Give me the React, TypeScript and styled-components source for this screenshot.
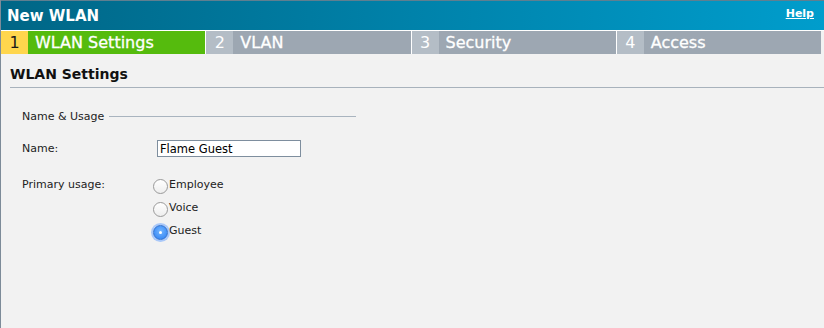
import React from "react";
import styled, { createGlobalStyle, css } from "styled-components";

const Global = createGlobalStyle`
  html, body { margin: 0; padding: 0; background: #f2f2f2; }
  body { font-family: "DejaVu Sans", Verdana, sans-serif; }
`;

const Page = styled.div`
  width: 824px;
  height: 328px;
  box-sizing: border-box;
  border-left: 1px solid #7d8b99;
  background: #f2f2f2;
  overflow: hidden;
`;

const Header = styled.div`
  height: 31px;
  box-sizing: border-box;
  border-top: 1px solid #5f7f90;
  border-bottom: 1px solid #ffffff;
  background: linear-gradient(to right, #006686 0%, #0082aa 50%, #009dcc 100%);
  display: flex;
  align-items: center;
  justify-content: space-between;
  padding: 0 10px 0 6px;
`;

const Title = styled.div`
  color: #ffffff;
  font-weight: bold;
  font-size: 15px;
`;

const Help = styled.a`
  color: #ffffff;
  font-weight: bold;
  font-size: 11px;
  text-decoration: underline;
  cursor: pointer;
  margin-bottom: 4px;
`;

const TabBar = styled.div`
  width: 820px;
  height: 23px;
  display: flex;
  gap: 1px;
  background: #ffffff;
`;

const Tab = styled.div`
  flex: 1;
  display: flex;
  align-items: stretch;
`;

const TabNum = styled.div<{ $active?: boolean }>`
  width: 27px;
  display: flex;
  align-items: center;
  justify-content: center;
  font-size: 16px;
  color: ${(p) => (p.$active ? "#1a1a1a" : "#ffffff")};
  background: ${(p) => (p.$active ? "#ffd64d" : "#b4bdc6")};
`;

const TabLabel = styled.div<{ $active?: boolean }>`
  flex: 1;
  display: flex;
  align-items: center;
  padding-left: 7px;
  font-size: 16px;
  color: #ffffff;
  -webkit-text-stroke: 0.3px #ffffff;
  background: ${(p) => (p.$active ? "#55bb0d" : "#9da7b2")};
`;

const Content = styled.div`
  padding: 12px 0 0 9px;
`;

const SectionTitle = styled.div`
  font-weight: bold;
  font-size: 14px;
  color: #111;
  padding-bottom: 5px;
  border-bottom: 1px solid #a8b2bc;
`;

const Group = styled.div`
  padding: 22px 0 0 12px;
`;

const Legend = styled.div`
  display: flex;
  align-items: center;
  width: 334px;
  font-size: 11px;
  color: #222;
  gap: 5px;
  &::after {
    content: "";
    flex: 1;
    height: 1px;
    background: #a9b4bf;
  }
`;

const Row = styled.div<{ $mt: number }>`
  display: flex;
  align-items: flex-start;
  margin-top: ${(p) => p.$mt}px;
`;

const Label = styled.div<{ $pt: number }>`
  width: 135px;
  padding-top: ${(p) => p.$pt}px;
  font-size: 11px;
  color: #222;
`;

const TextInput = styled.div`
  width: 144px;
  height: 17px;
  box-sizing: border-box;
  border: 1px solid #7e8e9e;
  background: #fff;
  font-size: 11.5px;
  color: #000;
  padding: 1px 0 0 2px;
  line-height: 14px;
`;

const RadioList = styled.div`
  display: flex;
  flex-direction: column;
  gap: 8px;
  margin-left: -4px;
  margin-top: 2px;
`;

const RadioRow = styled.div`
  display: flex;
  align-items: center;
  gap: 1px;
  font-size: 11px;
  color: #222;
  height: 15px;
`;

const RadioDot = styled.span<{ $checked?: boolean }>`
  width: 15px;
  height: 15px;
  border-radius: 50%;
  box-sizing: border-box;
  margin-top: 3px;
  position: relative;
  ${(p) =>
    p.$checked
      ? css`
          background: radial-gradient(circle at 50% 40%, #74b6ff, #2a7ef2);
          border: 1px solid #2d6fd0;
          box-shadow: 0 0 0 2px rgba(110, 165, 255, 0.55);
          &::after {
            content: "";
            position: absolute;
            left: 5px;
            top: 5px;
            width: 3px;
            height: 3px;
            border-radius: 50%;
            background: #fff;
          }
        `
      : css`
          background: linear-gradient(#ffffff, #eeeeee);
          border: 1px solid #9a9a9a;
        `}
`;

export default function App() {
  return (
    <Page>
      <Global />
      <Header>
        <Title>New WLAN</Title>
        <Help>Help</Help>
      </Header>
      <TabBar>
        {["WLAN Settings", "VLAN", "Security", "Access"].map((t, i) => (
          <Tab key={t}>
            <TabNum $active={i === 0}>{i + 1}</TabNum>
            <TabLabel $active={i === 0}>{t}</TabLabel>
          </Tab>
        ))}
      </TabBar>
      <Content>
        <SectionTitle>WLAN Settings</SectionTitle>
        <Group>
          <Legend>Name &amp; Usage</Legend>
          <Row $mt={17}>
            <Label $pt={2}>Name:</Label>
            <TextInput>Flame Guest</TextInput>
          </Row>
          <Row $mt={18}>
            <Label $pt={3}>Primary usage:</Label>
            <RadioList>
              <RadioRow><RadioDot />Employee</RadioRow>
              <RadioRow><RadioDot />Voice</RadioRow>
              <RadioRow><RadioDot $checked />Guest</RadioRow>
            </RadioList>
          </Row>
        </Group>
      </Content>
    </Page>
  );
}
